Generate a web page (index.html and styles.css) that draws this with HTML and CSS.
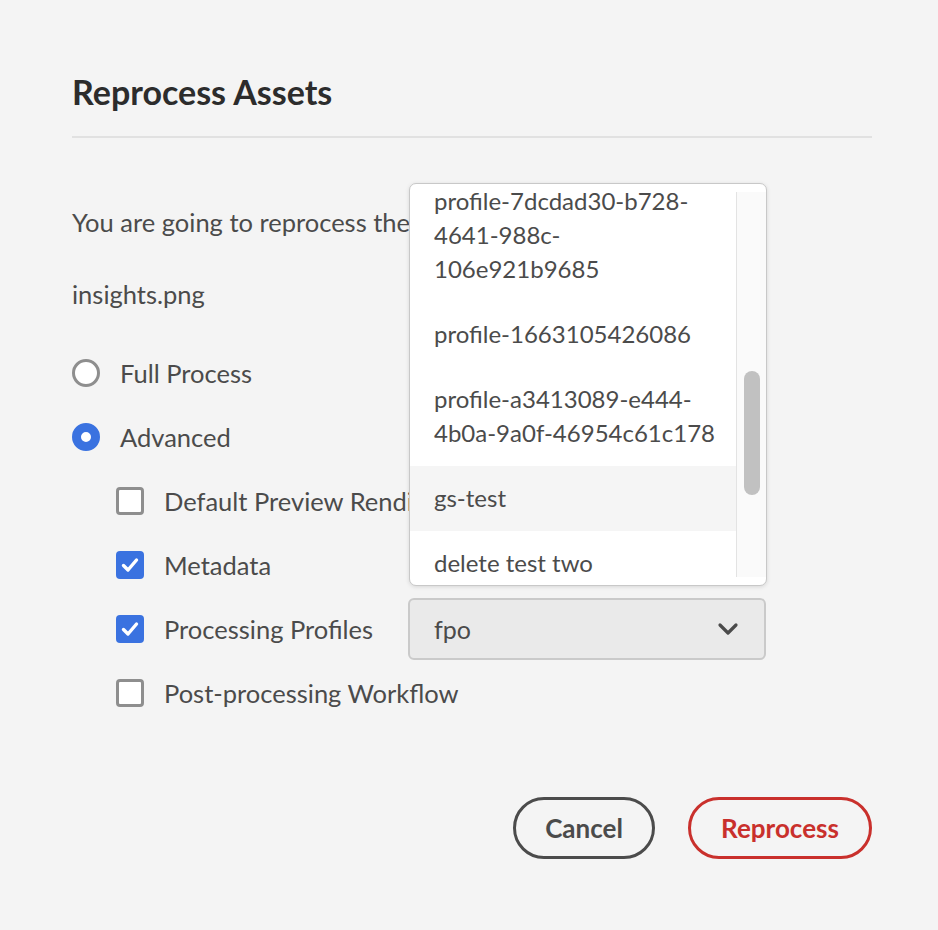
FILE: index.html
```html
<!DOCTYPE html>
<html>
<head>
<meta charset="utf-8">
<link rel="stylesheet" href="styles.css">
</head>
<body>
<div class="dialog">
  <h1 class="title">Reprocess Assets</h1>
  <div class="divider"></div>
  <p class="text intro">You are going to reprocess the following asset:</p>
  <p class="text filename">insights.png</p>
  <div class="options">
    <div class="row">
      <span class="radio"></span>
      <span class="label">Full Process</span>
    </div>
    <div class="row">
      <span class="radio checked"></span>
      <span class="label">Advanced</span>
    </div>
    <div class="row sub">
      <span class="checkbox"></span>
      <span class="label">Default Preview Renditions</span>
    </div>
    <div class="row sub">
      <span class="checkbox checked"><svg viewBox="0 0 28 28" width="28" height="28"><path d="M7.5 14.5 L12 19 L20.5 9" fill="none" stroke="#fff" stroke-width="3.4" stroke-linecap="round" stroke-linejoin="round"/></svg></span>
      <span class="label">Metadata</span>
    </div>
    <div class="row sub">
      <span class="checkbox checked"><svg viewBox="0 0 28 28" width="28" height="28"><path d="M7.5 14.5 L12 19 L20.5 9" fill="none" stroke="#fff" stroke-width="3.4" stroke-linecap="round" stroke-linejoin="round"/></svg></span>
      <span class="label label-fixed">Processing Profiles</span>
      <div class="select-wrap">
        <div class="menu">
          <div class="menu-viewport">
            <ul class="menu-list">
              <li class="item">profile-7dcdad30-b728-<br>4641-988c-<br>106e921b9685</li>
              <li class="item">profile-1663105426086</li>
              <li class="item">profile-a3413089-e444-<br>4b0a-9a0f-46954c61c178</li>
              <li class="item hover">gs-test</li>
              <li class="item">delete test two</li>
            </ul>
          </div>
          <div class="track"><div class="thumb"></div></div>
        </div>
        <div class="select">
          <span class="select-value">fpo</span>
          <svg class="chevron" viewBox="0 0 22 14" width="22" height="14"><path d="M3 3 L11 11 L19 3" fill="none" stroke="#4b4b4b" stroke-width="3.2" stroke-linecap="round" stroke-linejoin="round"/></svg>
        </div>
      </div>
    </div>
    <div class="row sub">
      <span class="checkbox"></span>
      <span class="label">Post-processing Workflow</span>
    </div>
  </div>
  <div class="actions">
    <button class="btn btn-secondary">Cancel</button>
    <button class="btn btn-primary">Reprocess</button>
  </div>
</div>
</body>
</html>
```

FILE: styles.css
```css
* { box-sizing: border-box; }
html, body {
  margin: 0;
  padding: 0;
  background: #f4f4f4;
}
body {
  font-family: Lato, "Noto Sans", sans-serif;
  color: #4b4b4b;
  width: 938px;
  height: 930px;
  overflow: hidden;
}
.dialog {
  padding: 73px 66px 0 72px;
}
.title {
  margin: 0;
  font-size: 34px;
  line-height: 38px;
  font-weight: 700;
  color: #2c2c2c;
}
.divider {
  margin-top: 25px;
  height: 2px;
  background: #e1e1e1;
}
.text {
  margin: 0;
  font-size: 25.5px;
  line-height: 34px;
  white-space: nowrap;
}
.intro { margin-top: 67px; }
.filename { margin-top: 38px; }
.options {
  margin-top: 30px;
  display: flex;
  flex-direction: column;
}
.row {
  height: 64px;
  display: flex;
  align-items: center;
  gap: 20px;
  font-size: 25.5px;
  white-space: nowrap;
}
.row.sub { padding-left: 44px; }
.radio {
  width: 28px;
  height: 28px;
  border-radius: 50%;
  border: 3px solid #8e8e8e;
  background: #fff;
  flex: none;
}
.radio.checked {
  border: 9px solid #3a72e0;
}
.checkbox {
  width: 28px;
  height: 28px;
  border-radius: 4px;
  border: 3px solid #8e8e8e;
  background: #fff;
  flex: none;
  display: flex;
  align-items: center;
  justify-content: center;
}
.checkbox.checked {
  border: none;
  background: #3a72e0;
}
.checkbox svg { display: block; }
.label-fixed { width: 224px; }
.select-wrap {
  position: relative;
}
.select {
  width: 358px;
  height: 62px;
  border: 2px solid #cacaca;
  border-radius: 6px;
  background: #eaeaea;
  display: flex;
  align-items: center;
  justify-content: space-between;
  padding: 0 25px 0 24px;
}
.select-value {
  font-size: 25px;
  line-height: 34px;
}
.chevron { display: block; }
.menu {
  position: absolute;
  left: 1px;
  bottom: calc(100% + 12px);
  width: 358px;
  height: 403px;
  border: 1.5px solid #c8c8c8;
  border-radius: 7px;
  background: #fff;
  box-shadow: 0 1px 4px rgba(0,0,0,0.12);
  padding: 7.5px 0;
  display: flex;
  z-index: 2;
}
.menu-viewport {
  width: 326px;
  height: 385px;
  overflow: hidden;
}
.menu-list {
  list-style: none;
  margin: -23px 0 0 0;
  padding: 0;
}
.item {
  padding: 15.5px 10px 15.5px 24px;
  font-size: 24px;
  line-height: 34px;
  white-space: nowrap;
}
.item.hover { background: #f5f5f5; }
.track {
  width: 30px;
  height: 385px;
  border-left: 1px solid #e3e3e3;
  background: #fafafa;
  padding: 179px 0 0 7px;
}
.thumb {
  width: 16px;
  height: 124px;
  border-radius: 8px;
  background: #c1c1c1;
}
.actions {
  margin-top: 72px;
  display: flex;
  justify-content: flex-end;
  gap: 33px;
}
.btn {
  height: 62px;
  border-radius: 31px;
  border: 3px solid;
  background: transparent;
  font-family: Lato, "Noto Sans", sans-serif;
  font-weight: 700;
  font-size: 26px;
  padding: 0;
}
.btn-secondary {
  width: 142px;
  border-color: #4b4b4b;
  color: #4b4b4b;
}
.btn-primary {
  width: 184px;
  border-color: #c9302c;
  color: #c9302c;
}
```
